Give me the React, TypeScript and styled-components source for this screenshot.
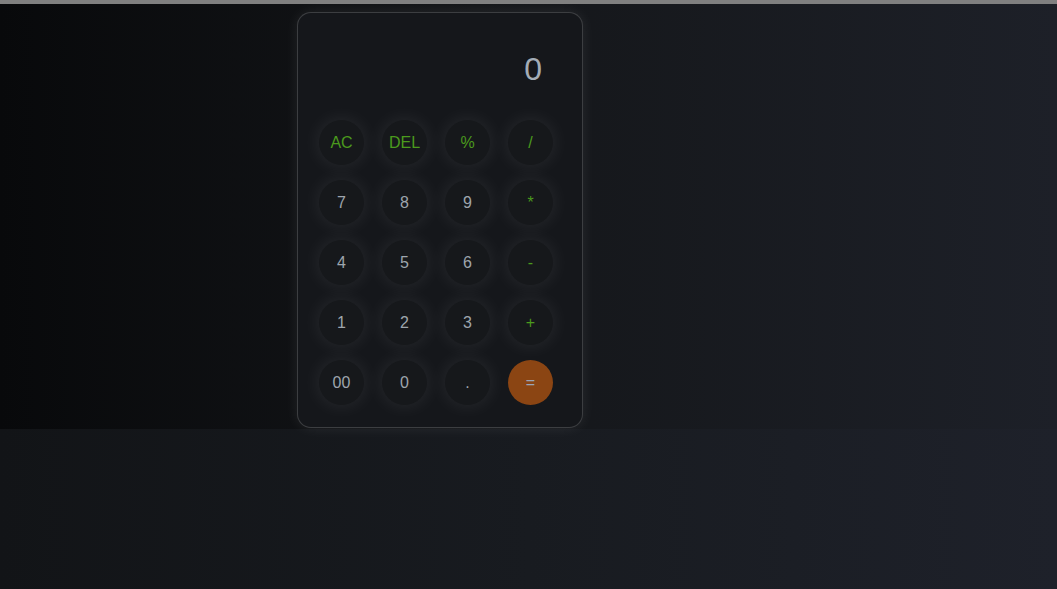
import React from "react";
import styled, { createGlobalStyle } from "styled-components";

const Global = createGlobalStyle`
  html, body {
    margin: 0;
    padding: 0;
  }
  body {
    min-height: 100vh;
    background: linear-gradient(90deg, #121417 0%, #181b20 50%, #1e212a 100%);
    font-family: "Liberation Sans", Arial, sans-serif;
  }
`;

const TopBar = styled.div`
  height: 4px;
  background: #808080;
`;

const Stage = styled.main`
  height: 425px;
  box-sizing: border-box;
  padding-top: 8px;
  padding-left: 297px;
  background: linear-gradient(90deg, #08090b 0%, #141619 45%, #1d2028 100%);
`;

const Card = styled.section`
  width: 286px;
  height: 416px;
  box-sizing: border-box;
  border: 1px solid rgba(255, 255, 255, 0.17);
  border-radius: 14px;
  background: #15171b;
  box-shadow: 0 0 14px rgba(255, 255, 255, 0.08);
  padding: 20px 28px 22px 21px;
  display: flex;
  flex-direction: column;
`;

const Display = styled.div`
  height: 72px;
  line-height: 72px;
  text-align: right;
  padding-right: 12px;
  font-size: 32px;
  color: #a3acb6;
  margin-bottom: 15px;
`;

const Keys = styled.div`
  display: grid;
  grid-template-columns: repeat(4, 45px);
  grid-auto-rows: 45px;
  column-gap: 18px;
  row-gap: 15px;
`;

type Kind = "op" | "num" | "eq";

const Key = styled.button<{ $kind: Kind }>`
  width: 45px;
  height: 45px;
  border: 0;
  outline: none;
  border-radius: 50%;
  padding: 0;
  font-family: "Liberation Sans", Arial, sans-serif;
  font-size: 16px;
  cursor: pointer;
  background: ${(p) => (p.$kind === "eq" ? "#8b4513" : "#16181b")};
  color: ${(p) =>
    p.$kind === "op" ? "#4b9a1d" : p.$kind === "eq" ? "#9aa6b8" : "#9ea5ad"};
  box-shadow: ${(p) =>
    p.$kind === "eq" ? "none" : "0 0 20px rgba(255, 255, 255, 0.09)"};
`;

const keys: { label: string; kind: Kind }[] = [
  { label: "AC", kind: "op" },
  { label: "DEL", kind: "op" },
  { label: "%", kind: "op" },
  { label: "/", kind: "op" },
  { label: "7", kind: "num" },
  { label: "8", kind: "num" },
  { label: "9", kind: "num" },
  { label: "*", kind: "op" },
  { label: "4", kind: "num" },
  { label: "5", kind: "num" },
  { label: "6", kind: "num" },
  { label: "-", kind: "op" },
  { label: "1", kind: "num" },
  { label: "2", kind: "num" },
  { label: "3", kind: "num" },
  { label: "+", kind: "op" },
  { label: "00", kind: "num" },
  { label: "0", kind: "num" },
  { label: ".", kind: "num" },
  { label: "=", kind: "eq" },
];

export default function App() {
  return (
    <>
      <Global />
      <TopBar />
      <Stage>
        <Card>
          <Display>0</Display>
          <Keys>
            {keys.map((k) => (
              <Key key={k.label} $kind={k.kind}>
                {k.label}
              </Key>
            ))}
          </Keys>
        </Card>
      </Stage>
    </>
  );
}
